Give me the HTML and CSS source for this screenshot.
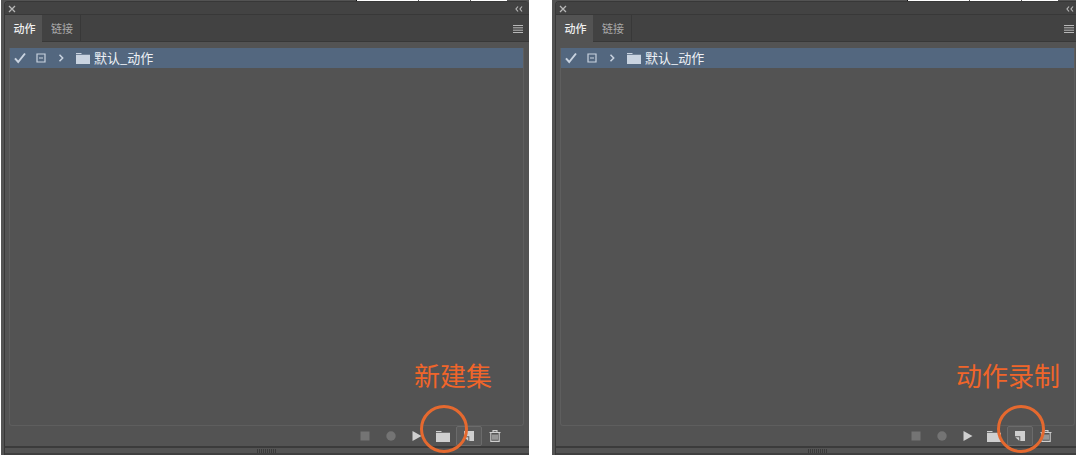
FILE: index.html
```html
<!DOCTYPE html>
<html lang="zh-CN">
<head>
<meta charset="utf-8">
<title>动作</title>
<link rel="stylesheet" href="styles.css">
</head>
<body>
<svg class="symbols" aria-hidden="true">
  <symbol id="close" viewBox="0 0 8 8"><path d="M1 1l6 6M7 1L1 7" fill="none" stroke="currentColor" stroke-width="1.3"/></symbol>
  <symbol id="collapse" viewBox="0 0 8 6"><path d="M3 .5L1 3l2 2.500M7 .5L5 3l2 2.500" fill="none" stroke="currentColor" stroke-width="1.2"/></symbol>
  <symbol id="menu" viewBox="0 0 10 8"><path d="M0 .5h10M0 2.800h10M0 5.200h10M0 7.500h10" stroke="currentColor"/></symbol>
  <symbol id="check" viewBox="0 0 12 12"><path d="M1 6.300l3.200 3.700L11 1.500" fill="none" stroke="currentColor" stroke-width="2"/></symbol>
  <symbol id="dialog" viewBox="0 0 10 10"><path d="M1 1h8v8H1zM3 5h4" fill="none" stroke="currentColor" stroke-width="1.200"/></symbol>
  <symbol id="chevron" viewBox="0 0 6 8"><path d="M1.500 .7L4.700 4 1.500 7.300" fill="none" stroke="currentColor" stroke-width="1.500"/></symbol>
  <symbol id="folder" viewBox="0 0 14 11"><path d="M0 0h5.500v1H0zM0 1.700h14V11H0z" fill="currentColor"/></symbol>
  <symbol id="stop" viewBox="0 0 10 10"><path d="M.5 .5h9v9h-9z" fill="currentColor"/></symbol>
  <symbol id="record" viewBox="0 0 10 10"><circle cx="5" cy="5" r="4.700" fill="currentColor"/></symbol>
  <symbol id="play" viewBox="0 0 10 10"><path d="M.5 0L9.500 5l-9 5z" fill="currentColor"/></symbol>
  <symbol id="new" viewBox="0 0 10 10"><path d="M0 0h10v10H5.300V5.200H0z" fill="currentColor"/><path d="M.3 6.200h4V10z" fill="currentColor"/></symbol>
  <symbol id="trash" viewBox="0 0 12 12"><path d="M4 2V.6h4V2M.5 2.500h11M1.800 3v8.400h8.400V3M4 4.500v5.300M6 4.500v5.300M8 4.500v5.300" fill="none" stroke="currentColor" stroke-width="1.100"/></symbol>
</svg>
<main class="comparison">
  <section class="panel">
    <div class="backdrop"></div>
    <div class="window">
      <header class="titlebar">
        <button class="plain" aria-label="关闭"><svg class="icon-close"><use href="#close"/></svg></button>
        <button class="plain" aria-label="折叠"><svg class="icon-collapse"><use href="#collapse"/></svg></button>
      </header>
      <nav class="tabs">
        <button class="tab active">动作</button>
        <button class="tab">链接</button>
        <button class="plain menu" aria-label="菜单"><svg class="icon-menu"><use href="#menu"/></svg></button>
      </nav>
      <div class="list">
        <div class="row">
          <svg class="icon-check"><use href="#check"/></svg>
          <svg class="icon-dialog"><use href="#dialog"/></svg>
          <svg class="icon-chevron"><use href="#chevron"/></svg>
          <svg class="icon-folder"><use href="#folder"/></svg>
          <span class="name">默认_动作</span>
        </div>
      </div>
      <footer class="toolbar">
        <button class="tool off" aria-label="停止"><svg class="icon-tool"><use href="#stop"/></svg></button>
        <button class="tool off" aria-label="记录"><svg class="icon-tool"><use href="#record"/></svg></button>
        <button class="tool" aria-label="播放"><svg class="icon-tool"><use href="#play"/></svg></button>
        <button class="tool" aria-label="新建集"><svg class="icon-folder"><use href="#folder"/></svg><span class="ring"></span></button>
        <button class="tool hover" aria-label="新建动作"><svg class="icon-tool"><use href="#new"/></svg></button>
        <button class="tool" aria-label="删除"><svg class="icon-trash"><use href="#trash"/></svg></button>
      </footer>
      <div class="grip"><span class="ridges"></span></div>
    </div>
    <p class="note">新建集</p>
  </section>
  <section class="panel">
    <div class="backdrop"></div>
    <div class="window">
      <header class="titlebar">
        <button class="plain" aria-label="关闭"><svg class="icon-close"><use href="#close"/></svg></button>
        <button class="plain" aria-label="折叠"><svg class="icon-collapse"><use href="#collapse"/></svg></button>
      </header>
      <nav class="tabs">
        <button class="tab active">动作</button>
        <button class="tab">链接</button>
        <button class="plain menu" aria-label="菜单"><svg class="icon-menu"><use href="#menu"/></svg></button>
      </nav>
      <div class="list">
        <div class="row">
          <svg class="icon-check"><use href="#check"/></svg>
          <svg class="icon-dialog"><use href="#dialog"/></svg>
          <svg class="icon-chevron"><use href="#chevron"/></svg>
          <svg class="icon-folder"><use href="#folder"/></svg>
          <span class="name">默认_动作</span>
        </div>
      </div>
      <footer class="toolbar">
        <button class="tool off" aria-label="停止"><svg class="icon-tool"><use href="#stop"/></svg></button>
        <button class="tool off" aria-label="记录"><svg class="icon-tool"><use href="#record"/></svg></button>
        <button class="tool" aria-label="播放"><svg class="icon-tool"><use href="#play"/></svg></button>
        <button class="tool" aria-label="新建集"><svg class="icon-folder"><use href="#folder"/></svg></button>
        <button class="tool hover" aria-label="动作录制"><svg class="icon-tool"><use href="#new"/></svg><span class="ring"></span></button>
        <button class="tool" aria-label="删除"><svg class="icon-trash"><use href="#trash"/></svg></button>
      </footer>
      <div class="grip"><span class="ridges"></span></div>
    </div>
    <p class="note wide">动作录制</p>
  </section>
</main>
</body>
</html>
```

FILE: styles.css
```css
* { box-sizing: border-box; }

body {
  margin: 0;
  overflow: hidden;
  background: #fff;
  font-family: "Noto Sans CJK SC", sans-serif;
  font-size: 12px;
}

svg { display: block; flex: none; }
.symbols { position: absolute; width: 0; height: 0; }

.comparison {
  display: grid;
  grid-template-columns: 1fr 1fr;
  gap: 23px;
  width: calc(100% + 4px);
  min-height: 100vh;
  padding-left: 1px;
}

.panel {
  position: relative;
  display: flex;
  flex-direction: column;
  padding-left: 3px;
  background: #535353;
}

.backdrop {
  height: 1px;
  margin: 0 22px 0 352px;
  border-left: 1px solid #111;
  background: linear-gradient(90deg, #fff 61px, #555 61px 62px, #fff 62px 113px, #555 113px 114px, #fff 114px);
}

.window {
  flex: 1;
  display: flex;
  flex-direction: column;
  border-top: 1px solid #383838;
  border-left: 1px solid #383838;
  border-radius: 4px 4px 0 0;
  background: #535353;
}

.plain {
  padding: 0;
  border: 0;
  background: none;
  color: #b8b8b8;
}

.titlebar {
  display: flex;
  align-items: center;
  justify-content: space-between;
  height: 13px;
  padding: 2px 6px 0 3px;
  border-bottom: 1px solid #383838;
  border-radius: 3px 3px 0 0;
  background: #434343;
}

.tabs {
  display: flex;
  height: 27px;
  background: #424242;
  box-shadow: inset 0 -1px #383838;
}

.tab {
  width: 39px;
  padding: 0 0 0 2px;
  border: 0;
  border-right: 1px solid #383838;
  background: none;
  color: #a9a9a9;
  font: inherit;
  font-size: 11px;
  line-height: 27px;
}

.tab.active {
  width: 37px;
  border-right: 0;
  background: #535353;
  color: #f0f0f0;
  font-weight: 500;
}

.menu { margin: 0 6px 0 auto; }

.list {
  flex: 1;
  margin: 6px 5px 0 4px;
  border: 1px solid #5e5e5e;
  border-top: 0;
  border-radius: 0 0 3px 3px;
}

.row {
  display: flex;
  align-items: center;
  height: 20px;
  padding-left: 4px;
  background: #53677f;
  color: #c9d3e0;
}

.icon-close { width: 8px; height: 8px; }
.icon-collapse { width: 8px; height: 6px; }
.icon-menu { width: 10px; height: 8px; }
.icon-check { width: 12px; height: 12px; margin-right: 10px; }
.icon-dialog { width: 10px; height: 10px; margin-right: 12px; }
.icon-chevron { width: 6px; height: 8px; margin-right: 12px; }
.icon-folder { width: 14px; height: 11px; }
.icon-tool { width: 10px; height: 10px; }
.icon-trash { width: 12px; height: 12px; }

.name {
  margin-left: 4px;
  color: #edf1f6;
  font-size: 13px;
  line-height: 20px;
}

.toolbar {
  display: flex;
  justify-content: flex-end;
  height: 20px;
  padding-right: 21px;
}

.tool {
  position: relative;
  display: flex;
  align-items: center;
  justify-content: center;
  width: 26px;
  padding: 0;
  border: 1px solid transparent;
  border-radius: 2px;
  background: none;
  color: #cfcfcf;
}

.tool.off { color: #747474; }

.tool.hover {
  border-color: #6b6b6b;
  background: #5a5a5a;
}

.ring {
  position: absolute;
  z-index: 1;
  top: -22px;
  left: -11px;
  width: 48px;
  height: 48px;
  border: 3px solid #e5692f;
  border-radius: 50%;
}

.grip {
  display: flex;
  justify-content: center;
  height: 9px;
  padding-top: 1px;
  border-top: 2px solid #3b3b3b;
  border-bottom: 2px solid #3f3f3f;
}

.ridges {
  width: 20px;
  height: 4px;
  background: repeating-linear-gradient(90deg, #3a3a3a 0 1px, #535353 1px 2px);
}

.note {
  position: absolute;
  right: 37px;
  bottom: 61px;
  margin: 0;
  color: #f0652a;
  font-size: 26px;
  line-height: 38px;
}

.note.wide { right: 20px; }
```
